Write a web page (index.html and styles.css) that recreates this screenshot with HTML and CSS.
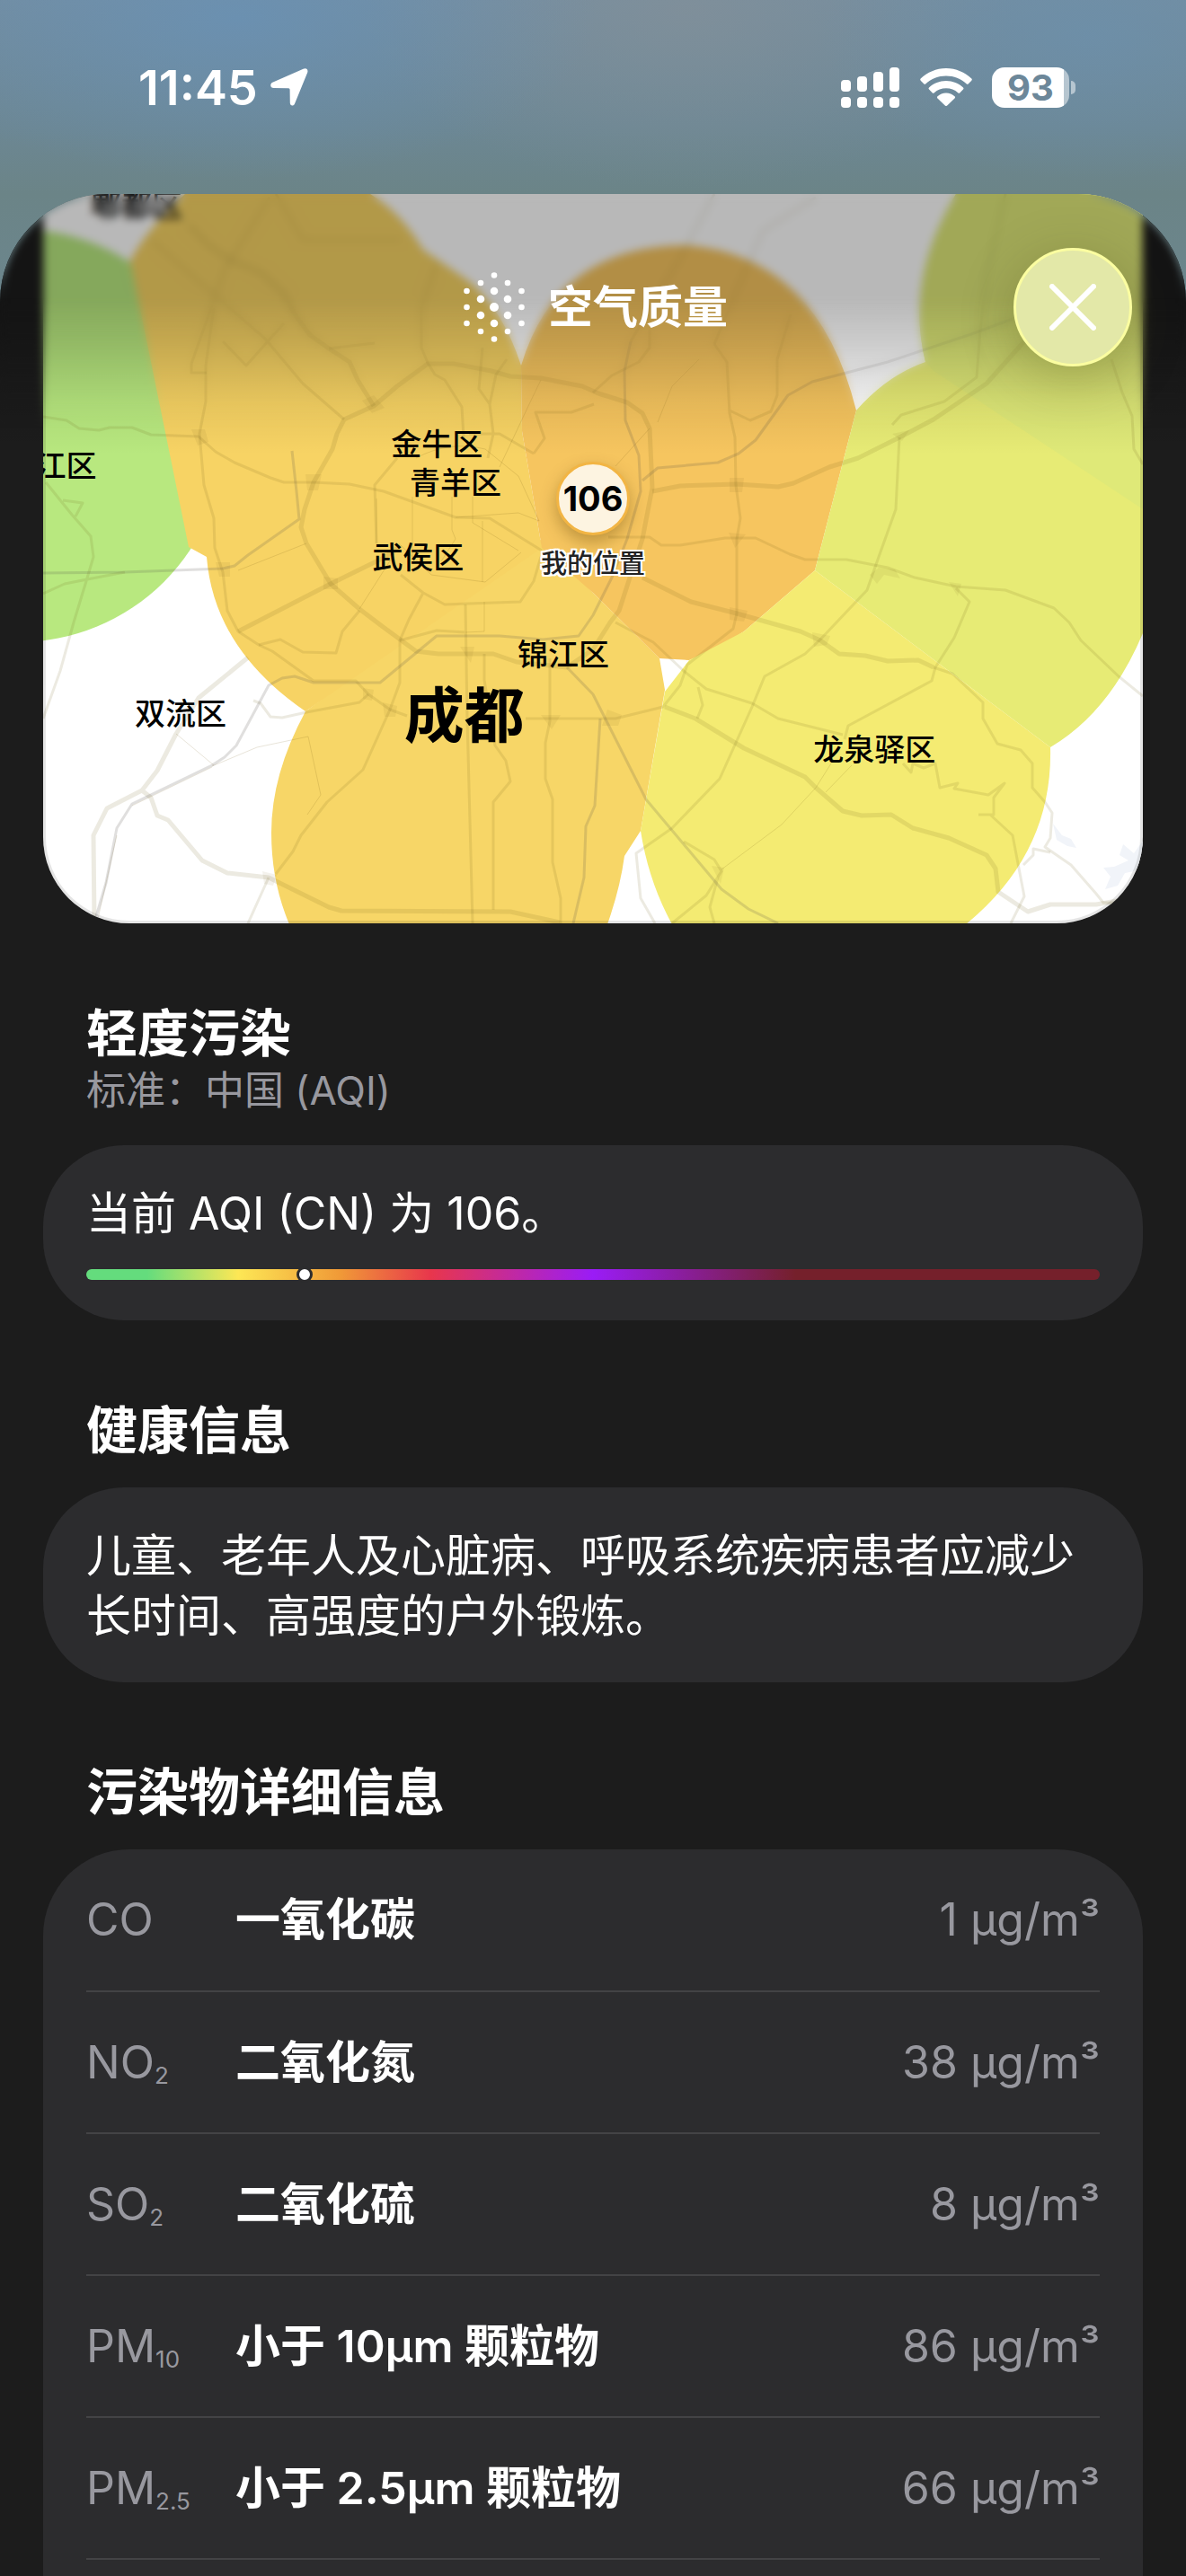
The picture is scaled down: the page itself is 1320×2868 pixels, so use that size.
FILE: index.html
```
<!DOCTYPE html>
<html lang="zh-CN">
<head>
  <meta charset="UTF-8">
  <meta name="viewport" content="width=device-width, initial-scale=1">
  <title>空气质量</title>
  <link rel="stylesheet" href="styles.css">
</head>
<body>
  <div class="status-bar">
    <div class="status-left">
      <span class="time">11:45</span>
      <svg class="icon-location" viewBox="0 0 42 42" aria-hidden="true">
        <path d="M36.500 .8C39.800 -.8 42.300 1.500 41.200 4.800L27 39.500C25.600 42.600 21.800 42 21.800 38.500L21.600 23.800Q21.500 22.400 20.200 22.300L3.800 22C-.2 22-1 17.500 2.300 15.800Z" fill="#fff"/>
      </svg>
    </div>
    <div class="status-right">
      <svg class="icon-signal" viewBox="0 0 66 45" aria-hidden="true" fill="#fff">
        <rect x="0" y="14" width="11" height="13" rx="4"/>
        <rect x="18" y="10" width="11" height="17" rx="4"/>
        <rect x="36" y="5" width="11" height="22" rx="4"/>
        <rect x="54" y="0" width="11" height="27" rx="4"/>
        <rect x="0" y="33" width="11" height="12" rx="4"/>
        <rect x="18" y="33" width="11" height="12" rx="4"/>
        <rect x="36" y="33" width="11" height="12" rx="4"/>
        <rect x="54" y="33" width="11" height="12" rx="4"/>
      </svg>
      <svg class="icon-wifi" viewBox="0 0 58 42" aria-hidden="true" fill="#fff">
        <path d="M29 0C40 0 50 4.500 57.300 11.500Q58.300 12.600 57.300 13.700L53.800 17.300Q52.700 18.300 51.600 17.300C45.500 11.700 37.600 8.500 29 8.500S12.500 11.700 6.400 17.300Q5.300 18.300 4.200 17.300L.7 13.700Q-.3 12.600 .7 11.500C8 4.500 18 0 29 0Z"/>
        <path d="M29 14C36.300 14 43 16.800 48 21.400Q49.100 22.500 48 23.600L44.400 27.200Q43.300 28.200 42.200 27.200C38.700 24.100 34.100 22.300 29 22.300S19.300 24.100 15.800 27.200Q14.700 28.200 13.600 27.200L10 23.600Q8.900 22.500 10 21.400C15 16.800 21.700 14 29 14Z"/>
        <path d="M29 27.500C32.700 27.500 36 28.900 38.500 31.200Q39.600 32.300 38.500 33.400L30.200 41.500Q29 42.600 27.800 41.500L19.500 33.400Q18.400 32.300 19.500 31.200C22 28.900 25.300 27.500 29 27.500Z"/>
      </svg>
      <div class="battery"><span>93</span></div>
    </div>
  </div>

  <main class="sheet">
    <div class="map">
      <svg class="map-canvas" viewBox="48 216 1224 812" preserveAspectRatio="xMidYMid slice" aria-hidden="true">
        <!-- station areas -->
        <circle cx="20" cy="485" r="230" fill="#b8e87f"/>
        <path fill="#f7d667" d="M340 792Q302 862 302 927Q302 982 322 1029H676Q690 990 695 953L713 925L740 768L734 733L660 660L603 600Z"/>
        <path fill="#f7d364" d="M206 216Q164 254 145 290L210 609L230 620Q238 722 340 792L603 610L581 480L580 407Q560 345 522 313L471 278Q446 236 412 216Z"/>
        <path fill="#f6c55f" d="M580 407Q620 273 765 273Q910 285 953 457L907 635L828 703Q798 723 767 735L734 733L660 660L603 610L581 480Z"/>
        <path fill="#e7eb75" d="M1064 216Q1007 310 1030 403Q987 418 953 457L907 635L1169 832Q1235 793 1272 705V216Z"/>
        <path fill="#dfe978" d="M1064 216Q1007 310 1030 403L1039 413L1272 567V216Z"/>
        <path fill="#f4eb72" d="M907 635L828 703L767 735L740 770L713 925Q722 982 748 1029H1075Q1172 950 1169 832Z"/>
        <path class="lake" d="M1272 936L1262 950L1250 940L1246 952L1256 958L1240 965L1228 966L1236 976L1230 990L1244 986L1252 972L1262 970L1272 962ZM1172 917L1176 935L1188 942L1198 944L1192 934L1182 930Z"/>

        <!-- minor streets -->
        <g class="road thin">
          <path d="M196 817L238 852M236 853L286 832L343 820L357 885L342 907M147 897L236 854M130 930L108 1027"/>
          <path d="M602 423L589 450L556 520M459 553V620M503 553V590L507 600L491 625M526 553V582L577 613M419 605V555M539 670V703L518 704M537 580V648M400 678L440 615M265 635L341 605"/>
          <path d="M723 477L685 519M732 470L748 430L778 400M948 852L919 882M803 968L870 918L908 877L925 850"/>
          <path d="M463 510Q500 490 540 500L577 530L600 580L577 571L507 576M446 607L480 640L540 648L580 615"/>
        </g>

        <!-- streets -->
        <g class="road">
          <path d="M48 464L74 468L88 477L110 479L122 476H147L168 484L221 486L240 503L261 515L301 532L316 537H349L389 539L427 547L463 560L507 576L545 577L603 613"/>
          <path d="M48 661L72 650L97 645L139 637M51 537L80 573L101 597L104 620L96 647L82 693L67 747L48 800M70 557L92 560L84 575"/>
          <path d="M238 343L229 407V447L222 483L227 540L238 577L239 610L248 637L253 680L265 703L288 718L303 725L349 758H396L410 773L434 790L453 797"/>
          <path d="M288 718L312 712L337 726L374 727L381 703L400 680M471 660L495 673L579 670L594 647L602 620M446 640L471 660L455 690L445 713V760L434 790L404 857L364 893L335 930L326 948L307 973"/>
          <path d="M282 780L290 783L301 798L314 799L341 793L400 782L410 773M299 977L290 997L276 1028"/>
          <path d="M518 673L520 800L526 1028M539 728V757L551 830L563 847L568 870L549 893V1013M612 733V803L607 827V867L615 890V960L624 1000V1028M445 713L486 702L518 704"/>
          <path d="M486 293L469 343V387L476 404L484 417L495 423L514 453L516 487M537 387L533 433L545 450L549 483L543 510M564 400L552 417L545 450M522 483H556L594 505M661 450L636 459H596L606 488L594 505M442 510L417 540L419 605"/>
          <path d="M168 267L295 377L337 427L383 467M248 380L274 407L316 360M366 388L417 382M307 216L337 267H446M300 220L250 300L213 405V415H230"/>
          <path d="M660 437L681 418L711 403L723 387V367M795 383L809 403L812 460L818 487L819 540L824 577L820 600V683L816 700L765 740L757 763L738 787L685 800H585M812 457L835 468L858 458L865 440V400L880 350"/>
          <path d="M993 473L1003 462L1051 447L1087 420L1091 367L1098 307L1119 216M1001 487L997 567L978 620L965 657L913 712L896 728L851 753L837 787L801 867L748 922L708 950L713 1000L729 1028"/>
          <path d="M677 598H723L736 607H757L807 599H841L879 617L896 623H942L988 632L1018 643L1064 653L1119 657L1173 677L1190 693L1203 713L1245 753L1272 775"/>
          <path d="M1064 655L1079 670L1062 710L1041 743L1037 758L944 808L940 823M685 693L727 715L761 747L786 767L837 783L866 800L938 818M777 765L782 785L776 800"/>
          <path d="M1039 743L1060 750L1094 782V800L1110 828L1136 835L1149 850V877L1163 893L1171 905L1169 933L1163 943L1192 963L1220 995L1228 1005H1255"/>
          <path d="M1005 850L1014 860L1016 850L1028 855L1041 850L1046 877L1066 872L1062 878L1100 885L1118 872L1106 888V907H1089M1102 907L1127 930L1140 998L1125 1028M1139 963L1150 952V945L1169 949"/>
          <path d="M761 937L795 957L803 970L786 997L748 1028M799 977L790 1010L795 1028M1237 400L1249 437L1260 463L1262 500L1272 517M795 216L757 287L702 380M908 220L849 257L830 300L795 383"/>
        </g>

        <!-- ring roads -->
        <g class="road wide">
          <path d="M210 250L232 273L257 290L290 303L316 327L328 350L345 373L366 388L389 403L398 423L416 452"/>
          <path d="M666 438L648 430L602 421L568 419L547 413L505 405H476L442 430L416 452L383 467L375 483L370 500L349 537L339 567L335 587L341 605L368 650L400 678L425 697L463 725L488 728H549L575 737L631 743L660 723L679 693L689 680L702 640L715 600L726 543L723 477L715 460L698 448L666 438"/>
          <path d="M265 703L368 650L429 620L446 607M276 732L221 777L196 817L175 858L158 880L119 900L104 930L105 1027M158 880L168 888L175 908L187 913L225 958L253 972L299 977L366 1010L380 1014L568 1015L623 1027"/>
          <path d="M726 547L757 541L820 539L866 542L883 538L923 520L955 510L1001 487L1039 467L1098 427L1140 380"/>
          <path d="M715 643L769 670L820 683L891 703L913 713L934 728L963 730L988 736L1022 735L1039 743M740 787L774 800L828 833L896 865L908 877L938 903L959 908L992 907L1016 922L1056 933L1098 952L1108 967L1111 993L1144 1015L1169 1007H1220L1249 1002"/>
        </g>

        <!-- expressways -->
        <g class="road express">
          <path d="M48 638L139 637L248 633L261 630L276 618L333 578L330 547L325 502"/>
          <path d="M105 1027L118 983L130 922L147 895L236 852L250 843L263 830L299 763L314 755L328 753L349 760H423L486 708H556L604 712L644 708L660 685L681 643L698 600L713 547L711 507L696 468L695 413L702 380"/>
          <path d="M715 535L732 521L799 515L822 505L841 490L877 440L904 425L988 403L1081 372L1127 355"/>
          <path d="M631 743L660 773L719 890L761 940L803 990L833 1012L866 1028M668 800L662 897L652 920L650 977L638 1028"/>
        </g>
        <g class="junction">
          <path d="M403 446L416 440L428 454L414 460ZM340 528L358 528L354 546L342 546ZM213 478L228 478L232 492L220 496ZM240 626L256 626L256 642L244 642ZM360 642L376 644L376 656L360 656ZM812 676L832 680L828 692L812 690ZM904 704L924 708L920 718L906 720ZM812 532L828 532L826 548L812 548ZM602 796L624 796L614 812ZM404 766L416 768L414 780L404 778ZM512 720H528L524 738ZM426 782L442 786L440 798L428 798ZM968 640L978 632L996 634L1002 644L984 640L976 650ZM1056 648L1070 650L1066 664ZM292 970L308 974L304 986L294 984ZM676 790L692 796L688 808L670 808ZM792 964L806 966L802 984ZM811 593L830 595L818 610ZM993 483L1012 479L1004 491Z"/>
        </g>
      </svg>

      <span class="label" style="left: 8.5%; top: 1.6%">郫都区</span>
      <span class="label" style="left: .7%; top: 37.3%">温江区</span>
      <span class="label" style="left: 35.8%; top: 34.4%">金牛区</span>
      <span class="label" style="left: 37.5%; top: 39.7%">青羊区</span>
      <span class="label" style="left: 34.1%; top: 49.9%">武侯区</span>
      <span class="label" style="left: 47.3%; top: 63.2%">锦江区</span>
      <span class="label" style="left: 12.5%; top: 71.3%">双流区</span>
      <span class="label" style="left: 75.6%; top: 76.2%">龙泉驿区</span>
      <span class="label city" style="left: 38.3%; top: 71.6%">成都</span>
      <span class="pin" style="left: 50%; top: 41.8%">106</span>
      <span class="label place" style="left: 50%; top: 50.8%">我的位置</span>
    </div>

    <div class="veil"></div>
    <header class="sheet-header">
      <h1>
        <svg class="icon-aqi" viewBox="0 0 68 78" aria-hidden="true" fill="#fff">
          <circle cx="34" cy="3.500" r="3.300"/>
          <circle cx="19" cy="12" r="3.300"/><circle cx="49" cy="12" r="3.300"/>
          <circle cx="3.500" cy="21" r="3.300"/><circle cx="34" cy="21" r="4.300"/><circle cx="64.500" cy="21" r="3.300"/>
          <circle cx="19" cy="30" r="4.300"/><circle cx="49" cy="30" r="4.300"/>
          <circle cx="3.500" cy="39" r="3.300"/><circle cx="34" cy="39" r="5"/><circle cx="64.500" cy="39" r="3.300"/>
          <circle cx="19" cy="48" r="4.300"/><circle cx="49" cy="48" r="4.300"/>
          <circle cx="3.500" cy="57" r="3.300"/><circle cx="34" cy="57" r="4.300"/><circle cx="64.500" cy="57" r="3.300"/>
          <circle cx="19" cy="66" r="3.300"/><circle cx="49" cy="66" r="3.300"/>
          <circle cx="34" cy="74.500" r="3.300"/>
        </svg>
        空气质量
      </h1>
      <button class="close" type="button" aria-label="关闭">
        <svg viewBox="0 0 52 52" aria-hidden="true">
          <path d="M3 3L49 49M49 3L3 49" stroke="#fff" stroke-width="6" stroke-linecap="round"/>
        </svg>
      </button>
    </header>

    <section class="section">
      <h2>轻度污染</h2>
      <p class="subtitle">标准：中国 (AQI)</p>
      <div class="card card-scale">
        <p>当前 AQI (CN) 为 106。</p>
        <div class="scale" role="img" aria-label="AQI 106">
          <span class="scale-marker" style="left: 21.5%"></span>
        </div>
      </div>
    </section>

    <section class="section">
      <h2>健康信息</h2>
      <div class="card card-text">
        <p>儿童、老年人及心脏病、呼吸系统疾病患者应减少长时间、高强度的户外锻炼。</p>
      </div>
    </section>

    <section class="section">
      <h2>污染物详细信息</h2>
      <div class="card card-table">
        <table class="pollutants">
          <tr>
            <th scope="row">CO</th>
            <td class="name">一氧化碳</td>
            <td class="value">1 μg/m³</td>
          </tr>
          <tr>
            <th scope="row">NO<sub>2</sub></th>
            <td class="name">二氧化氮</td>
            <td class="value">38 μg/m³</td>
          </tr>
          <tr>
            <th scope="row">SO<sub>2</sub></th>
            <td class="name">二氧化硫</td>
            <td class="value">8 μg/m³</td>
          </tr>
          <tr>
            <th scope="row">PM<sub>10</sub></th>
            <td class="name">小于 10μm 颗粒物</td>
            <td class="value">86 μg/m³</td>
          </tr>
          <tr>
            <th scope="row">PM<sub>2.5</sub></th>
            <td class="name">小于 2.5μm 颗粒物</td>
            <td class="value">66 μg/m³</td>
          </tr>
        </table>
      </div>
    </section>
  </main>
</body>
</html>
```
FILE: styles.css
```
* {
  box-sizing: border-box;
}
body {
  margin: 0;
  color: #fff;
  font-family: Inter, "Noto Sans CJK SC", sans-serif;
  font-size: 50px;
  line-height: 67px;
  /* hazy sky behind the sheet */
  background:
    radial-gradient(400px 180px at 20% 20px, rgba(104, 146, 184, 0.7), transparent),
    radial-gradient(300px 160px at 92% 40px, rgba(108, 144, 172, 0.7), transparent),
    radial-gradient(360px 200px at 58% 10px, rgba(132, 144, 152, 0.7), transparent),
    linear-gradient(#738da0, #6c8794 140px, #6b8487 216px, #6c8791 400px, #1c1c1c 600px);
  background-repeat: no-repeat;
  background-color: #1c1c1c;
}
h1, h2, p {
  margin: 0;
}

/* Status bar */
.status-bar {
  display: flex;
  justify-content: space-between;
  align-items: center;
  height: 216px;
  padding: 0 130px 22px 154px;
}
.status-left,
.status-right {
  display: flex;
  align-items: center;
}
.status-left {
  gap: 14px;
}
.status-right {
  gap: 22px;
}
.time {
  font-size: 54px;
  font-weight: 600;
}
.icon-location {
  width: 42px;
  height: 42px;
}
.icon-signal {
  width: 66px;
  height: 45px;
}
.icon-wifi {
  width: 58px;
  height: 42px;
}
.battery {
  position: relative;
  width: 86px;
  height: 45px;
  border-radius: 14px;
  background: linear-gradient(to right, #fff 93%, rgba(255, 255, 255, 0.5) 93%);
  color: #6c8799;
  font-size: 40px;
  font-weight: 700;
  line-height: 45px;
  text-align: center;
}
.battery::after {
  content: "";
  position: absolute;
  left: 88px;
  top: 15px;
  width: 5px;
  height: 15px;
  border-radius: 0 5px 5px 0;
  background: rgba(255, 255, 255, 0.5);
}

/* Sheet */
.sheet {
  position: relative;
  overflow: hidden;
  border-radius: 120px 120px 0 0;
  background: #1c1c1c;
}
.veil {
  position: absolute;
  top: 0;
  left: 0;
  right: 0;
  height: 290px;
  background: linear-gradient(rgba(0, 0, 0, 0.28) 40%, rgba(0, 0, 0, 0.2) 57%, rgba(0, 0, 0, 0.07) 80%, transparent);
}
.veil::before {
  content: "";
  position: absolute;
  inset: 0;
  backdrop-filter: blur(5px);
  -webkit-mask-image: linear-gradient(#000 40%, transparent 90%);
  mask-image: linear-gradient(#000 40%, transparent 90%);
}
.sheet-header {
  position: absolute;
  top: 0;
  left: 0;
  right: 0;
  display: flex;
  align-items: center;
  justify-content: flex-end;
  padding: 60px;
}
.sheet-header h1 {
  display: flex;
  flex: 1;
  align-items: center;
  justify-content: center;
  gap: 26px;
  padding-left: 138px;
  font-size: 50px;
  font-weight: 700;
  line-height: 67px;
}
.icon-aqi {
  width: 68px;
  height: 78px;
}
.close {
  display: flex;
  align-items: center;
  justify-content: center;
  width: 132px;
  height: 132px;
  padding: 0;
  border: 3px solid #fbfda0;
  border-radius: 50%;
  background: #e3e8a8;
  box-shadow: 0 12px 60px rgba(60, 60, 0, 0.25);
  cursor: pointer;
}
.close svg {
  width: 52px;
  height: 52px;
}

/* Map */
.map {
  position: relative;
  overflow: hidden;
  aspect-ratio: 1224 / 812;
  margin: 0 48px;
  border-radius: 0 0 96px 96px;
  background: #fff;
}
.map::after {
  content: "";
  position: absolute;
  inset: 0;
  border: 3px solid rgba(0, 0, 0, 0.1);
  border-top: 0;
  border-radius: inherit;
}
.map-canvas {
  display: block;
  width: 100%;
  height: 100%;
}
.road {
  fill: none;
  stroke: #6e5a14;
  stroke-opacity: 0.13;
  stroke-width: 3;
  stroke-linejoin: round;
}
.road.thin {
  stroke-width: 1;
  stroke-opacity: 0.16;
}
.road.wide {
  stroke-width: 5;
}
.road.express {
  stroke: #55504a;
  stroke-opacity: 0.18;
}
.junction {
  fill: #6e5a14;
  fill-opacity: 0.08;
}
.lake {
  fill: #f1f4f9;
}
.label {
  position: absolute;
  transform: translate(-50%, -50%);
  color: #000;
  font-size: 34px;
  font-weight: 500;
  line-height: 40px;
  white-space: nowrap;
}
.label.city {
  font-size: 67px;
  font-weight: 700;
  line-height: 80px;
}
.label.place {
  color: #222;
  font-size: 29px;
  text-shadow: 2px 0 #fff, -2px 0 #fff, 0 2px #fff, 0 -2px #fff, 2px 2px #fff, -2px -2px #fff, 2px -2px #fff, -2px 2px #fff;
}
.pin {
  position: absolute;
  transform: translate(-50%, -50%);
  width: 82px;
  height: 82px;
  border: 3px solid #f2b544;
  border-radius: 50%;
  background: #fdf4e1;
  box-shadow: 0 8px 18px rgba(90, 60, 0, 0.35);
  color: #000;
  font-size: 38px;
  font-weight: 700;
  line-height: 76px;
  text-align: center;
}

/* Sections */
.section {
  margin: 0 48px;
  padding-top: 81px;
}
h2 {
  padding: 0 48px;
  font-size: 57px;
  font-weight: 700;
  line-height: 84px;
}
.subtitle {
  padding: 0 48px;
  color: #98989f;
  font-size: 44px;
  line-height: 42px;
}
.card {
  margin-top: 21px;
  padding: 0 48px;
  border-radius: 90px;
  background: #2c2c2e;
}
.subtitle + .card {
  margin-top: 40px;
}
.card-scale {
  padding-top: 43px;
  padding-bottom: 45px;
}
.card-text {
  padding-top: 43px;
  padding-bottom: 40px;
}
.card-table {
  padding-bottom: 18px;
  border-radius: 96px 96px 0 0;
}
.scale {
  position: relative;
  height: 12px;
  margin-top: 28px;
  border-radius: 6px;
  background: linear-gradient(to right, #64dc7d 6%, #fde755 15%, #f09a37 25%, #e8364c 34%, #9a1cf6 50%, #75202b 70%);
}
.scale-marker {
  position: absolute;
  top: -3px;
  width: 18px;
  height: 18px;
  margin-left: -9px;
  border: 3px solid #2c2c2e;
  border-radius: 50%;
  background: #fff;
}

/* Pollutant list */
.pollutants {
  width: 100%;
  border-collapse: collapse;
}
.pollutants tr {
  height: 158px;
  border-bottom: 2px solid #434345;
}
.pollutants th,
.pollutants td {
  padding: 0;
  text-align: left;
  white-space: nowrap;
}
.pollutants th {
  width: 166px;
  color: #98989f;
  font-weight: 400;
}
.pollutants sub {
  font-size: 26px;
  line-height: 0;
  vertical-align: -6px;
}
.pollutants .name {
  font-weight: 600;
}
.pollutants .value {
  color: #98989f;
  text-align: right;
}
```
